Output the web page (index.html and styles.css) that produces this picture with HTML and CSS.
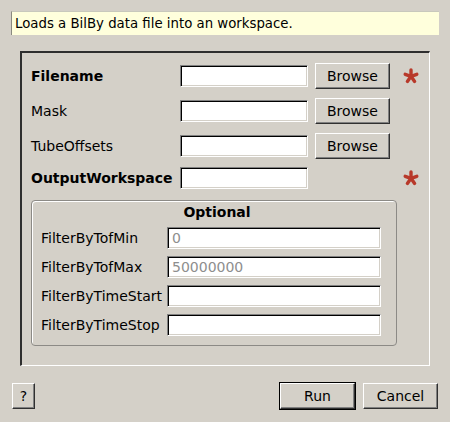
FILE: index.html
```html
<!DOCTYPE html>
<html>
<head>
<meta charset="utf-8">
<link rel="stylesheet" href="styles.css">
</head>
<body>
<div class="dialog">
  <div class="tooltip">Loads a BilBy data file into an workspace.</div>
  <div class="frame">
    <div class="props">
      <div class="row">
        <span class="lbl bold">Filename</span>
        <input class="field" type="text">
        <button class="btn browse">Browse</button>
        <svg class="req" viewBox="0 0 16 16" width="16" height="16"><g stroke="#b8392a" stroke-width="3.4" stroke-linecap="round"><line x1="8" y1="8.3" x2="8" y2="2"/><line x1="8" y1="8.3" x2="13.8" y2="6.3"/><line x1="8" y1="8.3" x2="11.6" y2="13.4"/><line x1="8" y1="8.3" x2="4.4" y2="13.4"/><line x1="8" y1="8.3" x2="2.2" y2="6.3"/></g></svg>
      </div>
      <div class="row">
        <span class="lbl">Mask</span>
        <input class="field" type="text">
        <button class="btn browse">Browse</button>
      </div>
      <div class="row">
        <span class="lbl">TubeOffsets</span>
        <input class="field" type="text">
        <button class="btn browse">Browse</button>
      </div>
      <div class="row short">
        <span class="lbl bold">OutputWorkspace</span>
        <input class="field" type="text">
        <span class="spacer"></span>
        <svg class="req" viewBox="0 0 16 16" width="16" height="16"><g stroke="#b8392a" stroke-width="3.4" stroke-linecap="round"><line x1="8" y1="8.3" x2="8" y2="2"/><line x1="8" y1="8.3" x2="13.8" y2="6.3"/><line x1="8" y1="8.3" x2="11.6" y2="13.4"/><line x1="8" y1="8.3" x2="4.4" y2="13.4"/><line x1="8" y1="8.3" x2="2.2" y2="6.3"/></g></svg>
      </div>
    </div>
    <div class="group">
      <div class="group-title">Optional</div>
      <div class="grow">
        <span class="glbl">FilterByTofMin</span>
        <input class="field wide" type="text" placeholder="0">
      </div>
      <div class="grow">
        <span class="glbl">FilterByTofMax</span>
        <input class="field wide" type="text" placeholder="50000000">
      </div>
      <div class="grow">
        <span class="glbl">FilterByTimeStart</span>
        <input class="field wide" type="text">
      </div>
      <div class="grow">
        <span class="glbl">FilterByTimeStop</span>
        <input class="field wide" type="text">
      </div>
    </div>
  </div>
  <div class="actions">
    <button class="btn help">?</button>
    <span class="fill"></span>
    <button class="btn run">Run</button>
    <button class="btn cancel">Cancel</button>
  </div>
</div>
</body>
</html>
```

FILE: styles.css
```css
html, body {
  margin: 0;
  padding: 0;
  background: #d4d0c8;
}
body {
  width: 450px;
  height: 422px;
  overflow: hidden;
  font-family: "DejaVu Sans", "Liberation Sans", sans-serif;
  font-size: 14px;
  color: #000;
}
.dialog {
  padding: 11px 0 0 0;
}
.tooltip {
  margin-left: 11px;
  width: 424px;
  height: 23px;
  padding-left: 3px;
  font-size: 13.3px;
  background: #ffffdc;
  border-left: 1px solid #8a8a80;
  border-top: 1px solid #c8c8bc;
  display: flex;
  align-items: center;
}
.frame {
  margin: 16px 0 0 20px;
  width: 398px;
  height: 302px;
  border-style: solid;
  border-width: 2px 1px 1px 2px;
  border-color: #2e2e2e #ffffff #ffffff #2e2e2e;
  padding: 10px 0 0 9px;
}
.props {
  display: flex;
  flex-direction: column;
}
.row {
  display: flex;
  align-items: center;
  height: 26px;
}
.row + .row {
  margin-top: 9px;
}
.row.short {
  height: 22px;
  margin-top: 8px;
}
.lbl {
  width: 149px;
  flex: none;
  white-space: nowrap;
}
.bold {
  font-weight: bold;
}
.field {
  box-sizing: border-box;
  width: 128px;
  height: 22px;
  margin: 0;
  padding: 0 0 0 4px;
  flex: none;
  font-family: inherit;
  font-size: 14px;
  background: #fff;
  border-style: solid;
  border-width: 1px;
  border-color: #808080 #ffffff #ffffff #808080;
  box-shadow: inset 1px 1px 0 #000, inset -1px -1px 0 #d4d0c8;
  outline: none;
}
.field::placeholder {
  color: #8e8e8e;
}
.btn {
  box-sizing: border-box;
  width: 75px;
  height: 26px;
  margin: 0;
  padding: 0;
  font-family: inherit;
  font-size: 14px;
  color: #000;
  background: #d4d0c8;
  border-style: solid;
  border-width: 1px;
  border-color: #ffffff #303030 #303030 #ffffff;
  box-shadow: inset -1px -1px 0 #808080;
}
.browse {
  margin-left: 7px;
}
.spacer {
  width: 82px;
  flex: none;
}
.req {
  margin-left: 13px;
  flex: none;
  display: block;
}
.group {
  box-sizing: border-box;
  margin-top: 11px;
  width: 366px;
  height: 146px;
  border: 1px solid #8c8a86;
  border-radius: 4px;
  box-shadow: inset 1px 1px 0 #ffffff;
  padding: 3px 0 0 9px;
}
.group-title {
  font-weight: bold;
  text-align: center;
  line-height: 16px;
  height: 16px;
  margin-left: -9px;
  padding-left: 6px;
}
.grow {
  display: flex;
  align-items: center;
  height: 22px;
  margin-top: 7px;
}
.grow:first-of-type {
  margin-top: 6px;
}
.glbl {
  width: 126px;
  flex: none;
  white-space: nowrap;
}
.field.wide {
  width: 214px;
}
.actions {
  display: flex;
  align-items: center;
  margin-top: 17px;
  padding: 0 12px 0 12px;
  height: 26px;
}
.help {
  width: 23px;
}
.fill {
  flex: 1;
}
.run {
  outline: 1px solid #000;
  margin-right: 8px;
}
```
